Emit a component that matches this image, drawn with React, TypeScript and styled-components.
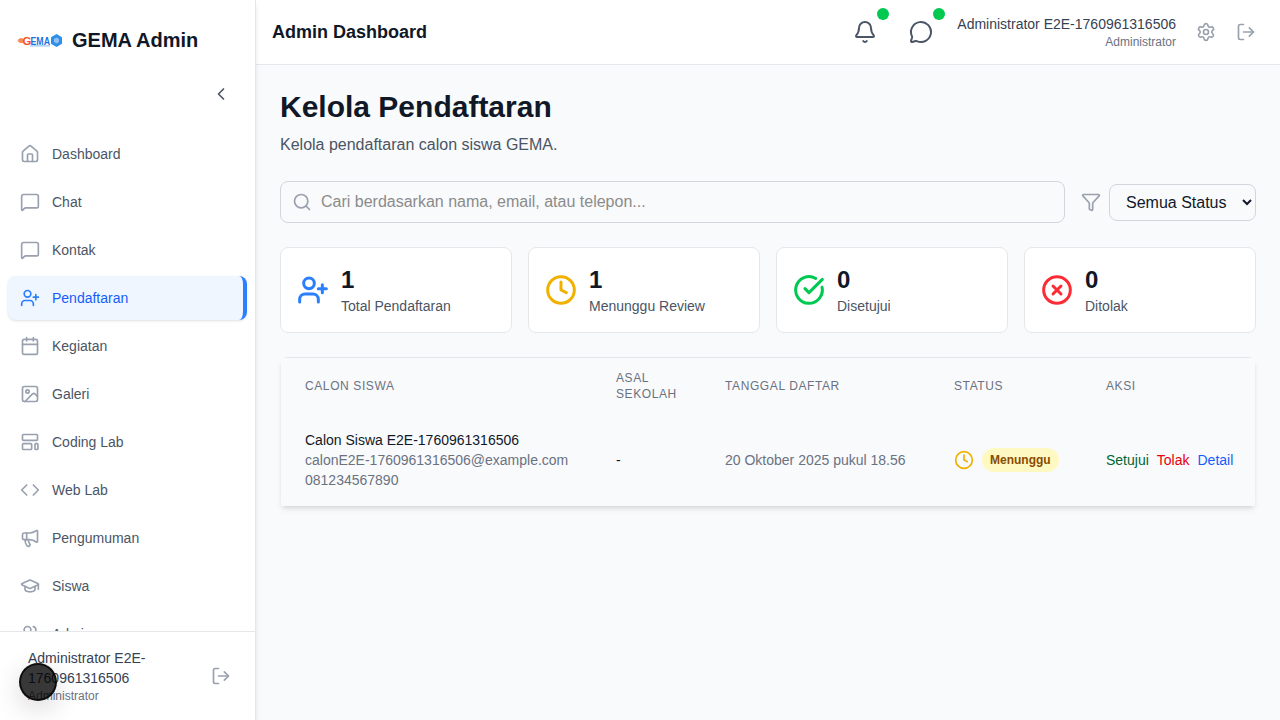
import React from "react";
import styled, { createGlobalStyle } from "styled-components";
import {
  House, MessageSquare, UserPlus, Calendar, Image, Code, Megaphone, GraduationCap, Users,
  ChevronLeft, LogOut, Bell, MessageCircle, Settings, Search, Funnel, Clock, CircleCheckBig, CircleX,
} from "lucide-react";

const Global = createGlobalStyle`
  * { box-sizing: border-box; }
  html, body { margin: 0; height: 100%; }
  body { font-family: "Liberation Sans", Arial, sans-serif; color: #101828; background: #f9fafb; overflow: hidden; }
`;

const Shell = styled.div`display: flex; height: 720px; width: 1280px; overflow: hidden;`;
const Sidebar = styled.aside`
  width: 256px; flex: none; display: flex; flex-direction: column; background: #fff;
  border-right: 1px solid #e5e7eb; box-shadow: 0 4px 6px -1px rgba(0,0,0,.1), 0 2px 4px -2px rgba(0,0,0,.1);
  position: relative; z-index: 2;
`;
const Brand = styled.div`height: 80px; flex: none; display: flex; align-items: center; gap: 8px; padding-left: 16px;`;
const BrandName = styled.span`font-size: 20px; line-height: 28px; font-weight: 700; color: #101828;`;
const ToggleRow = styled.div`height: 28px; flex: none; display: flex; align-items: center; justify-content: flex-end; padding-right: 24px; color: #4a5565;`;
const Nav = styled.nav`flex: 1; min-height: 0; overflow: hidden; display: flex; flex-direction: column; gap: 4px; padding: 24px 8px 0;`;
const NavItem = styled.a<{ $active?: boolean }>`
  height: 44px; flex: none; display: flex; align-items: center; gap: 12px; padding-left: 12px; border-radius: 8px;
  font-size: 14px; line-height: 20px; color: ${(p) => (p.$active ? "#155dfc" : "#4a5565")};
  background: ${(p) => (p.$active ? "#eff6ff" : "transparent")};
  border-right: 4px solid ${(p) => (p.$active ? "#2b7fff" : "transparent")};
  box-shadow: ${(p) => (p.$active ? "0 1px 3px rgba(0,0,0,.1), 0 1px 2px -1px rgba(0,0,0,.1)" : "none")};
  svg { color: ${(p) => (p.$active ? "#2b7fff" : "#99a1af")}; flex: none; }
`;
const SideFoot = styled.div`flex: none; height: 89px; border-top: 1px solid #e5e7eb; background: #fff; display: flex; align-items: center; gap: 12px; padding: 0 24px 0 28px; color: #99a1af;`;
const SideUser = styled.div`flex: 1; min-width: 0;`;
const SideName = styled.div`font-size: 14px; line-height: 20px; color: #364153;`;
const SideRole = styled.div`font-size: 12px; line-height: 16px; color: #6a7282;`;
const SideLogout = styled.span`flex: none; display: flex;`;
const Floating = styled.div`
  position: fixed; left: 19px; top: 663px; width: 38px; height: 38px; border-radius: 50%; z-index: 5;
  background: rgba(0,0,0,.78); border: 2px solid rgba(0,0,0,.75); box-shadow: 0 8px 28px rgba(0,0,0,.16);
`;

const Column = styled.div`flex: 1; min-width: 0; display: flex; flex-direction: column;`;
const Topbar = styled.header`height: 65px; flex: none; background: #fff; border-bottom: 1px solid #e5e7eb; display: flex; align-items: center; padding: 0 16px;`;
const TopTitle = styled.div`flex: 1; font-size: 18px; line-height: 28px; font-weight: 700; color: #101828;`;
const TopIcon = styled.button`
  position: relative; width: 48px; height: 48px; padding: 12px; border: 0; background: none; color: #4a5565;
  display: flex; margin-right: 8px; &:nth-of-type(2) { margin-right: 12px; }
`;
const Dot = styled.span`position: absolute; top: 0; right: 0; width: 12px; height: 12px; border-radius: 50%; background: #00c951;`;
const TopUser = styled.div`text-align: right;`;
const TopName = styled.div`font-size: 14px; line-height: 20px; color: #364153;`;
const TopRole = styled.div`font-size: 12px; line-height: 16px; color: #6a7282;`;
const SmallAction = styled.button<{ $first?: boolean }>`
  width: 36px; height: 36px; padding: 8px; border: 0; background: none; color: #99a1af; display: flex;
  margin-left: ${(p) => (p.$first ? "12px" : "4px")};
`;

const Main = styled.main`flex: 1; min-height: 0; padding: 24px; background: #f9fafb; overflow: hidden;`;
const H1 = styled.h1`margin: 0 0 8px; font-size: 30px; line-height: 36px; font-weight: 700; color: #101828;`;
const Lead = styled.p`margin: 0 0 24px; font-size: 16px; line-height: 24px; color: #4a5565;`;
const Filters = styled.div`display: flex; align-items: center; gap: 16px; margin-bottom: 24px;`;
const SearchBox = styled.div`position: relative; flex: 1; color: #99a1af; svg { position: absolute; left: 12px; top: 11px; }`;
const SearchInput = styled.input`
  width: 100%; height: 42px; padding: 0 16px 0 40px; border: 1px solid #d1d5dc; border-radius: 8px; background: #f9fafb;
  font: 16px "Liberation Sans", Arial, sans-serif; color: #101828; outline: none;
  &::placeholder { color: #8b8b8b; opacity: 1; }
`;
const StatusFilter = styled.div`display: flex; align-items: center; gap: 8px; color: #99a1af;`;
const StatusSelect = styled.select`
  width: 147px; height: 37px; padding: 0 0 0 12px; border: 1px solid #d1d5dc; border-radius: 8px; background: #f9fafb;
  font: 16px "Liberation Sans", Arial, sans-serif; color: #101828;
`;
const Stats = styled.div`display: grid; grid-template-columns: repeat(4, 1fr); gap: 16px; margin-bottom: 24px;`;
const StatCard = styled.div<{ $color: string }>`
  display: flex; align-items: center; gap: 12px; padding: 16px; background: #fff; border: 1px solid #e5e7eb; border-radius: 8px;
  svg { color: ${(p) => p.$color}; flex: none; }
`;
const StatValue = styled.div`font-size: 24px; line-height: 32px; font-weight: 700; color: #101828;`;
const StatLabel = styled.div`font-size: 14px; line-height: 20px; color: #4a5565;`;

const TableWrap = styled.div`
  border: 1px solid; border-color: #e5e7eb transparent transparent; border-radius: 8px;
`;
const Table = styled.table`
  width: 974px; border-collapse: collapse; table-layout: fixed; background: #f9fafb;
  box-shadow: 0 4px 6px -1px rgba(0,0,0,.1), 0 2px 4px -2px rgba(0,0,0,.1);
`;
const Th = styled.th<{ $w: number }>`
  width: ${(p) => p.$w}px; padding: 12px 24px; text-align: left; font-size: 12px; line-height: 16px; font-weight: 400;
  letter-spacing: .6px; text-transform: uppercase; color: #6a7282;
`;
const Td = styled.td`padding: 16px 24px; font-size: 14px; line-height: 20px; color: #6a7282; vertical-align: middle;`;
const NoWrapCell = styled(Td)`white-space: nowrap;`;
const Strong = styled.div`color: #101828;`;
const Dash = styled.span`color: #101828;`;
const StatusCell = styled.div`display: flex; align-items: center; gap: 8px; svg { color: #f0b100; flex: none; }`;
const Badge = styled.span`padding: 4px 8px; border-radius: 999px; background: #fef9c2; color: #894b00; font-size: 12px; line-height: 16px; font-weight: 700;`;
const Actions = styled.div`display: flex; gap: 8px; white-space: nowrap;`;
const ActionLink = styled.a<{ $color: string }>`color: ${(p) => p.$color};`;

const CodingIcon = ({ size = 20 }: { size?: number }) => (
  <svg width={size} height={size} viewBox="0 0 24 24" fill="none" stroke="currentColor" strokeWidth="2" strokeLinecap="round" strokeLinejoin="round">
    <rect x="3" y="3" width="18" height="7" rx="1" />
    <rect x="3" y="14" width="11" height="7" rx="1" />
    <rect x="18" y="14" width="3.5" height="7" rx="1" />
  </svg>
);

const Logo = () => (
  <svg width="48" height="20" viewBox="0 0 48 20">
    <circle cx="3" cy="10.5" r="1.6" fill="#fdba8c" />
    <circle cx="5" cy="10.5" r="2.6" fill="#fb8b5a" />
    <text x="6.5" y="14.5" fontFamily="Liberation Sans" fontSize="11.5" fontWeight="700" fill="#f2541b">G</text>
    <text x="14.5" y="14.5" fontFamily="Liberation Sans" fontSize="11" fontWeight="700" textLength="19.5" lengthAdjust="spacingAndGlyphs" fill="#1d75e0">EMA</text>
    <rect x="14" y="15.3" width="20" height="1.2" fill="#9cc4f0" />
    <polygon points="40.5,4 46,7.2 46,13.8 40.5,17 35,13.8 35,7.2" fill="#2f8fe8" />
    <polygon points="40.5,7.5 43,9 43,12 40.5,13.5 38,12 38,9" fill="#8cc2f5" />
  </svg>
);

const navItems = [
  ["Dashboard", House], ["Chat", MessageSquare], ["Kontak", MessageSquare], ["Pendaftaran", UserPlus],
  ["Kegiatan", Calendar], ["Galeri", Image], ["Coding Lab", CodingIcon], ["Web Lab", Code],
  ["Pengumuman", Megaphone], ["Siswa", GraduationCap], ["Admin", Users],
] as const;

export default function App() {
  return (
    <>
      <Global />
      <Shell>
        <Sidebar>
          <Brand><Logo /><BrandName>GEMA Admin</BrandName></Brand>
          <ToggleRow><ChevronLeft size={20} /></ToggleRow>
          <Nav>
            {navItems.map(([label, Icon]) => (
              <NavItem key={label} $active={label === "Pendaftaran"}><Icon size={20} />{label}</NavItem>
            ))}
          </Nav>
          <SideFoot>
            <SideUser>
              <SideName>Administrator E2E-1760961316506</SideName>
              <SideRole>Administrator</SideRole>
            </SideUser>
            <SideLogout><LogOut size={20} /></SideLogout>
          </SideFoot>
        </Sidebar>
        <Column>
          <Topbar>
            <TopTitle>Admin Dashboard</TopTitle>
            <TopIcon><Bell size={24} /><Dot /></TopIcon>
            <TopIcon><MessageCircle size={24} /><Dot /></TopIcon>
            <TopUser>
              <TopName>Administrator E2E-1760961316506</TopName>
              <TopRole>Administrator</TopRole>
            </TopUser>
            <SmallAction $first><Settings size={20} /></SmallAction>
            <SmallAction><LogOut size={20} /></SmallAction>
          </Topbar>
          <Main>
            <H1>Kelola Pendaftaran</H1>
            <Lead>Kelola pendaftaran calon siswa GEMA.</Lead>
            <Filters>
              <SearchBox>
                <Search size={20} />
                <SearchInput placeholder="Cari berdasarkan nama, email, atau telepon..." />
              </SearchBox>
              <StatusFilter>
                <Funnel size={20} />
                <StatusSelect defaultValue="all"><option value="all">Semua Status</option></StatusSelect>
              </StatusFilter>
            </Filters>
            <Stats>
              <StatCard $color="#2b7fff"><UserPlus size={32} strokeWidth={2.25} /><div><StatValue>1</StatValue><StatLabel>Total Pendaftaran</StatLabel></div></StatCard>
              <StatCard $color="#f0b100"><Clock size={32} strokeWidth={2.25} /><div><StatValue>1</StatValue><StatLabel>Menunggu Review</StatLabel></div></StatCard>
              <StatCard $color="#00c951"><CircleCheckBig size={32} strokeWidth={2.25} /><div><StatValue>0</StatValue><StatLabel>Disetujui</StatLabel></div></StatCard>
              <StatCard $color="#fb2c36"><CircleX size={32} strokeWidth={2.25} /><div><StatValue>0</StatValue><StatLabel>Ditolak</StatLabel></div></StatCard>
            </Stats>
            <TableWrap>
              <Table>
                <thead>
                  <tr>
                    <Th $w={311}>Calon Siswa</Th>
                    <Th $w={109}>Asal Sekolah</Th>
                    <Th $w={229}>Tanggal Daftar</Th>
                    <Th $w={152}>Status</Th>
                    <Th $w={173}>Aksi</Th>
                  </tr>
                </thead>
                <tbody>
                  <tr>
                    <NoWrapCell>
                      <Strong>Calon Siswa E2E-1760961316506</Strong>
                      <div>calonE2E-1760961316506@example.com</div>
                      <div>081234567890</div>
                    </NoWrapCell>
                    <Td><Dash>-</Dash></Td>
                    <Td>20 Oktober 2025 pukul 18.56</Td>
                    <Td><StatusCell><Clock size={20} /><Badge>Menunggu</Badge></StatusCell></Td>
                    <Td>
                      <Actions>
                        <ActionLink $color="#016630">Setujui</ActionLink>
                        <ActionLink $color="#e7000b">Tolak</ActionLink>
                        <ActionLink $color="#155dfc">Detail</ActionLink>
                      </Actions>
                    </Td>
                  </tr>
                </tbody>
              </Table>
            </TableWrap>
          </Main>
        </Column>
      </Shell>
      <Floating />
    </>
  );
}
